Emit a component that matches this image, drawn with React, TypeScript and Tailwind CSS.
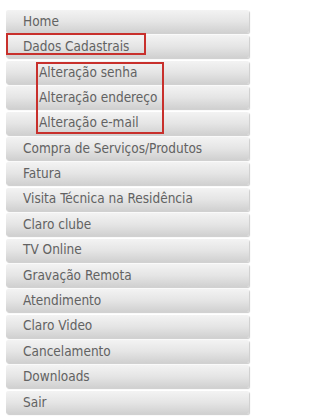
const ITEMS_TOP = ["Home"];
const SUB_ITEMS = ["Alteração senha", "Alteração endereço", "Alteração e-mail"];
const ITEMS_BOTTOM = [
  "Compra de Serviços/Produtos",
  "Fatura",
  "Visita Técnica na Residência",
  "Claro clube",
  "TV Online",
  "Gravação Remota",
  "Atendimento",
  "Claro Video",
  "Cancelamento",
  "Downloads",
  "Sair",
];

function MenuRow({ label, indent = false }: { label: string; indent?: boolean }) {
  return (
    <div
      className={`flex h-[23px] items-center rounded-[2px] bg-gradient-to-b from-[#f3f3f3] via-[#e5e5e5] to-[#d0d0d0] shadow-[1px_1px_1px_rgba(0,0,0,0.2)] text-[13.5px] text-[#626262] ${
        indent ? "pl-[33px]" : "pl-[17px]"
      }`}
    >
      <span className="leading-none">{label}</span>
    </div>
  );
}

export default function App() {
  return (
    <div
      className="h-[420px] w-[256px] bg-white pl-[6px] pt-[10px]"
      style={{ fontFamily: '"DejaVu Sans Condensed", "DejaVu Sans", sans-serif' }}
    >
      <div className="flex w-[243px] flex-col gap-[2.4px]">
        {ITEMS_TOP.map((label) => (
          <MenuRow key={label} label={label} />
        ))}
        <div className="relative">
          <MenuRow label="Dados Cadastrais" />
          <span className="pointer-events-none absolute -top-[2px] left-0 h-[22px] w-[140px] border-2 border-[#c8302c]" />
        </div>
        <div className="relative flex flex-col gap-[2.4px]">
          {SUB_ITEMS.map((label) => (
            <MenuRow key={label} label={label} indent />
          ))}
          <span className="pointer-events-none absolute left-[30px] top-[1px] h-[72px] w-[128px] border-2 border-[#c8302c]" />
        </div>
        {ITEMS_BOTTOM.map((label) => (
          <MenuRow key={label} label={label} />
        ))}
      </div>
    </div>
  );
}
